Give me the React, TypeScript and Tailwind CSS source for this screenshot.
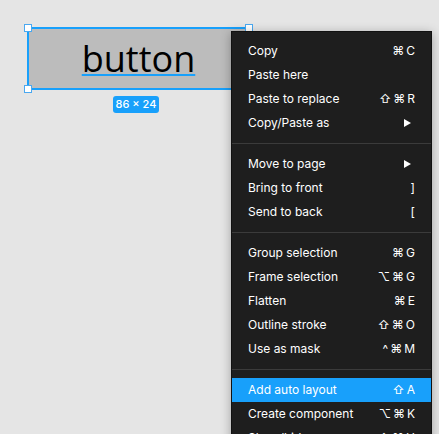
import React from 'react'

type Item = { label: string; keys?: string[]; submenu?: boolean; active?: boolean }

const SECTIONS: Item[][] = [
  [
    { label: 'Copy', keys: ['⌘', 'C'] },
    { label: 'Paste here' },
    { label: 'Paste to replace', keys: ['⇧', '⌘', 'R'] },
    { label: 'Copy/Paste as', submenu: true },
  ],
  [
    { label: 'Move to page', submenu: true },
    { label: 'Bring to front', keys: [']'] },
    { label: 'Send to back', keys: ['['] },
  ],
  [
    { label: 'Group selection', keys: ['⌘', 'G'] },
    { label: 'Frame selection', keys: ['⌥', '⌘', 'G'] },
    { label: 'Flatten', keys: ['⌘', 'E'] },
    { label: 'Outline stroke', keys: ['⇧', '⌘', 'O'] },
    { label: 'Use as mask', keys: ['^', '⌘', 'M'] },
  ],
  [
    { label: 'Add auto layout', keys: ['⇧', 'A'], active: true },
    { label: 'Create component', keys: ['⌥', '⌘', 'K'] },
    { label: 'Show/hide', keys: ['⇧', '⌘', 'H'] },
  ],
]

function Handle({ className }: { className: string }) {
  return <div className={`absolute w-2 h-2 bg-white border-[1.5px] border-[#4aa8f0] ${className}`} />
}

function MenuRow({ item }: { item: Item }) {
  return (
    <div
      className={`flex items-center justify-between h-6 pl-4 pr-4 text-[12px] text-white ${
        item.active ? 'bg-[#18a0fb]' : ''
      }`}
    >
      <span>{item.label}</span>
      {item.keys && (
        <span className="flex items-center gap-[2px]">
          {item.keys.map((k, i) => (
            <span key={i}>{k}</span>
          ))}
        </span>
      )}
      {item.submenu && (
        <svg width="7" height="8" viewBox="0 0 7 8" className="mr-1">
          <polygon points="0,0 7,4 0,8" fill="white" />
        </svg>
      )}
    </div>
  )
}

export default function App() {
  return (
    <div
      className="relative w-[439px] h-[434px] overflow-hidden bg-[#e5e5e5]"
      style={{ fontFamily: 'Inter, "DejaVu Sans", sans-serif' }}
    >
      {/* selected layer */}
      <div className="absolute left-[27px] top-[27px] w-[223px] h-[63px] border-2 border-[#18a0fb] bg-[#bcbcbc] flex items-center justify-center">
        <span
          className="text-[36px] font-medium text-black leading-none underline decoration-[#18a0fb] decoration-[1.5px] underline-offset-[2px]"
          style={{ fontFamily: '"Open Sans", sans-serif' }}
        >
          button
        </span>
      </div>
      <Handle className="left-[24px] top-[24px]" />
      <Handle className="left-[245px] top-[24px]" />
      <Handle className="left-[24px] top-[85px]" />
      <Handle className="left-[245px] top-[85px]" />

      <div className="absolute left-[113px] top-[96px] w-[46px] h-[17px] rounded-[3px] bg-[#18a0fb] text-white text-[11px] font-medium flex items-center justify-center">
        86 × 24
      </div>

      {/* context menu */}
      <div className="absolute left-[231px] top-[31px] w-[201px] h-[420px] bg-[#1e1e1e] pt-[7px] border border-[#111] shadow-[0_2px_10px_rgba(0,0,0,0.3)]">
        {SECTIONS.map((section, si) => (
          <div key={si}>
            {si > 0 && (
              <div className="py-2">
                <div className="h-px bg-[#3b3b3b]" />
              </div>
            )}
            {section.map(item => (
              <MenuRow key={item.label} item={item} />
            ))}
          </div>
        ))}
      </div>
    </div>
  )
}
